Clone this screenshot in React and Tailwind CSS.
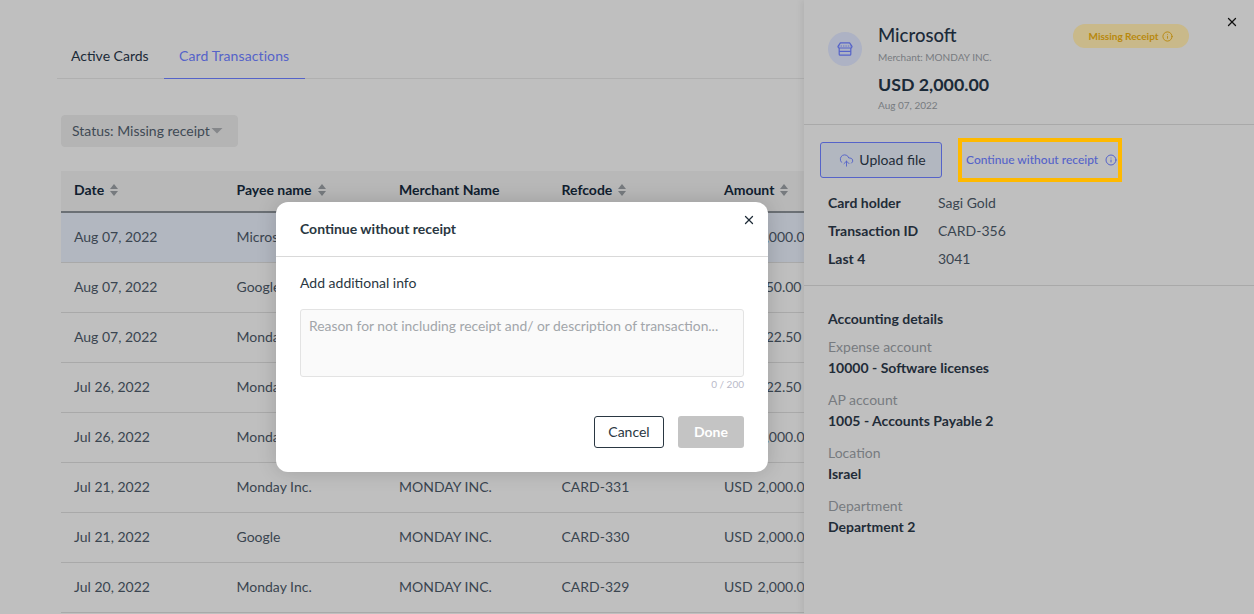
import { CloudUpload, Info, X } from "lucide-react";

const rows = [
  { date: "Aug 07, 2022", payee: "Microsoft", merchant: "MONDAY INC.", ref: "CARD-356", amount: "2,000.00" },
  { date: "Aug 07, 2022", payee: "Google", merchant: "MONDAY INC.", ref: "CARD-355", amount: "150.00" },
  { date: "Aug 07, 2022", payee: "Monday Inc.", merchant: "MONDAY INC.", ref: "CARD-354", amount: "122.50" },
  { date: "Jul 26, 2022", payee: "Monday Inc.", merchant: "MONDAY INC.", ref: "CARD-333", amount: "122.50" },
  { date: "Jul 26, 2022", payee: "Monday Inc.", merchant: "MONDAY INC.", ref: "CARD-332", amount: "2,000.00" },
  { date: "Jul 21, 2022", payee: "Monday Inc.", merchant: "MONDAY INC.", ref: "CARD-331", amount: "2,000.00" },
  { date: "Jul 21, 2022", payee: "Google", merchant: "MONDAY INC.", ref: "CARD-330", amount: "2,000.00" },
  { date: "Jul 20, 2022", payee: "Monday Inc.", merchant: "MONDAY INC.", ref: "CARD-329", amount: "2,000.00" },
];

const accounting = [
  { label: "Expense account", value: "10000 - Software licenses" },
  { label: "AP account", value: "1005 - Accounts Payable 2" },
  { label: "Location", value: "Israel" },
  { label: "Department", value: "Department 2" },
];

function SortIcon() {
  return (
    <svg width="8" height="12" viewBox="0 0 8 12" className="ml-1.5 shrink-0 fill-[#767a7e]">
      <path d="M4 0 L8 5 H0 Z" />
      <path d="M4 12 L0 7 H8 Z" />
    </svg>
  );
}

// storefront with a striped awning
function StoreIcon() {
  return (
    <svg width="16" height="14" viewBox="0 0 16 14" fill="none" stroke="#5563c9" strokeWidth="1.2" strokeLinejoin="round">
      <path d="M3.4 0.8h9.2l2.4 3.6c0 1-0.8 1.6-1.7 1.6H2.7C1.8 6 1 5.4 1 4.4z" />
      <path d="M1.2 4h13.6" strokeWidth="0.8" strokeDasharray="1.4 1" />
      <path d="M2.2 6v6.2a1 1 0 0 0 1 1h9.6a1 1 0 0 0 1-1V6" />
      <path d="M2.2 9.4h11.6" />
    </svg>
  );
}

function HeaderCell({ label, sortable = true }) {
  return (
    <div className="flex items-center pb-[2px] pl-[13px] text-sm font-bold text-[#10202f]">
      {label}
      {sortable && <SortIcon />}
    </div>
  );
}

function Table() {
  return (
    <div className="ml-1 mt-6 w-[800px]">
      <div className="grid h-[42px] grid-cols-[162.5px_162.5px_162.5px_162.5px_150px] border-b-2 border-[#6b7075] bg-[#b8b8b8]">
        <HeaderCell label="Date" />
        <HeaderCell label="Payee name" />
        <HeaderCell label="Merchant Name" sortable={false} />
        <HeaderCell label="Refcode" />
        <HeaderCell label="Amount" />
      </div>
      {rows.map((row, i) => (
        <div
          key={row.ref}
          className={`grid h-[50px] grid-cols-[162.5px_162.5px_162.5px_162.5px_150px] items-center border-b border-[#a9a9a9] pb-[2px] text-sm text-[#3a4550] ${
            i === 0 ? "bg-[#b2b7c0]" : ""
          }`}
        >
          <div className="pl-[13px]">{row.date}</div>
          <div className="pl-[13px]">{row.payee}</div>
          <div className="pl-[13px]">{row.merchant}</div>
          <div className="pl-[13px]">{row.ref}</div>
          <div className="whitespace-nowrap pl-[13px]">
            USD<span className="ml-[5px]">{row.amount}</span>
          </div>
        </div>
      ))}
    </div>
  );
}

function DetailRow({ label, value }) {
  return (
    <div className="flex h-7 items-center text-sm">
      <div className="w-[110px] font-bold text-[#1f2c38]">{label}</div>
      <div className="text-[#3a4550]">{value}</div>
    </div>
  );
}

function SidePanel() {
  return (
    <div className="relative h-full w-[450px] shrink-0 bg-[#bfbfbf] shadow-[-3px_0_6px_rgba(0,0,0,0.06)]">
      <button className="absolute right-[15px] top-[15px] text-[#111]">
        <X size={14} strokeWidth={2.2} />
      </button>

      <div className="flex h-[125px] border-b border-[#a9a9a9] pl-6 pt-[23px]">
        <div className="mt-[9px] flex h-[34px] w-[34px] items-center justify-center rounded-full bg-[#adb2c4]">
          <StoreIcon />
        </div>
        <div className="ml-4 w-[195px]">
          <div className="text-[18.5px] leading-6 font-medium text-[#1b2a38]">Microsoft</div>
          <div className="mt-[3px] text-[10px] leading-[14px] text-[#777b80]">Merchant: MONDAY INC.</div>
          <div className="mt-2 text-[17.8px] leading-6 font-bold text-[#1b2a38]">USD 2,000.00</div>
          <div className="mt-[2px] text-[10px] leading-[14px] text-[#777b80]">Aug 07, 2022</div>
        </div>
        <div className="mt-px flex h-6 w-[116px] items-center justify-center gap-1 rounded-full bg-[#c9b98a] text-[10px] font-bold text-[#b8880d]">
          Missing Receipt
          <Info size={11} />
        </div>
      </div>

      <div className="flex items-center pl-4 pt-[13px]">
        <button className="flex h-9 w-[122px] items-center justify-center gap-[5px] rounded-[3px] border border-[#5563c9] bg-[#b2b7c0] pl-[3px] text-sm text-[#1f2c38]">
          <CloudUpload size={15} strokeWidth={1.5} className="text-[#5563c9]" />
          Upload file
        </button>
        <div className="ml-4 flex h-11 w-[164px] items-center gap-[7px] border-4 border-[#ffb900] pl-1 text-xs font-medium text-[#5563c9]">
          Continue without receipt
          <Info size={12} />
        </div>
      </div>

      <div className="border-b border-[#a9a9a9] pb-3 pl-6 pt-[7px]">
        <DetailRow label="Card holder" value="Sagi Gold" />
        <DetailRow label="Transaction ID" value="CARD-356" />
        <DetailRow label="Last 4" value="3041" />
      </div>

      <div className="pl-6 pt-[23px]">
        <div className="text-sm leading-5 font-bold text-[#1f2c38]">Accounting details</div>
        {accounting.map((item, i) => (
          <div key={item.label} className={i === 0 ? "mt-2" : "mt-3"}>
            <div className="text-sm leading-5 text-[#777b80]">{item.label}</div>
            <div className="mt-px text-sm leading-5 font-bold text-[#1f2c38]">{item.value}</div>
          </div>
        ))}
      </div>
    </div>
  );
}

function ReceiptModal() {
  return (
    <div className="absolute left-[276px] top-[202px] h-[270px] w-[492px] rounded-xl bg-white shadow-[0_0_20px_rgba(0,0,0,0.16)]">
      <button className="absolute right-3 top-[11px] text-[#1f2c38]">
        <X size={14} strokeWidth={2.2} />
      </button>
      <div className="flex h-[55px] items-center border-b border-[#d9d9d9] px-6 text-sm font-bold text-[#2a3742]">
        Continue without receipt
      </div>
      <div className="px-6 pt-4">
        <div className="text-sm leading-5 text-[#2a3742]">Add additional info</div>
        <textarea
          readOnly
          placeholder="Reason for not including receipt and/ or description of transaction..."
          className="mt-4 block h-[68px] w-full resize-none rounded-[3px] border border-[#e3e3e3] bg-[#fafafa] px-2 py-[6px] text-[13.85px] leading-5 outline-none placeholder:text-[#a2a6aa]"
        />
        <div className="mt-[-1px] text-right text-[10px] leading-4 text-[#b9bac9]">0 / 200</div>
        <div className="mt-6 flex justify-end gap-3.5">
          <button className="h-8 w-[70px] rounded-[3px] border border-[#2a3742] text-sm text-[#2a3742]">Cancel</button>
          <button className="h-8 w-[66px] rounded-[3px] bg-[#c4c4c4] text-sm font-bold text-white">Done</button>
        </div>
      </div>
    </div>
  );
}

export default function App() {
  return (
    <div className="relative flex h-screen w-full overflow-hidden bg-[#bfbfbf] font-['Lato',sans-serif]">
      <div className="min-w-0 flex-1 overflow-hidden pl-[57px] pt-[34px]">
        <div className="flex h-[45px] border-b border-[#b0b0b0] text-sm">
          <div className="flex h-[45px] w-[107px] items-center border-b border-transparent pl-[14px] text-[#1b2a38]">Active Cards</div>
          <div className="flex h-[45px] w-[141px] items-center border-b border-[#5563c9] pl-[15px] tracking-[0.1px] text-[#5563c9]">Card Transactions</div>
        </div>
        <button className="ml-1 mt-9 flex h-8 w-[177px] items-center rounded-[4px] border border-[#b4b4b4] bg-[#b4b4b4] pl-[10px] text-sm text-[#3f4a55]">
          Status: Missing receipt
          <svg width="12" height="6" viewBox="0 0 12 6" className="ml-px fill-[#85878a]">
            <path d="M0.5 0 H11.5 L6 5.5 Z" />
          </svg>
        </button>
        <Table />
      </div>
      <SidePanel />
      <ReceiptModal />
    </div>
  );
}
